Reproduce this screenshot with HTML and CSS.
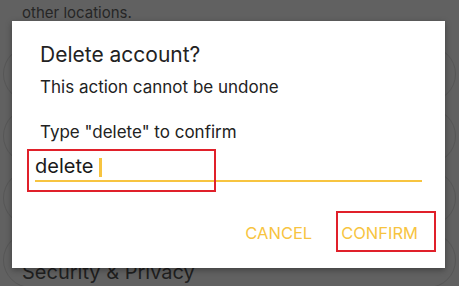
FILE: index.html
```html
<!DOCTYPE html>
<html lang="en">
<head>
    <meta charset="UTF-8">
    <meta name="viewport" content="width=device-width, initial-scale=1.0">
    <title>Delete account</title>
    <link rel="stylesheet" href="styles.css">
</head>
<body>
    <div class="screen">
        <p class="note">other locations.</p>
        <div class="cards">
            <div class="card"></div>
            <div class="card"></div>
            <div class="card"></div>
            <div class="card"><span class="card-title">Security &amp; Privacy</span></div>
        </div>

        <div class="dialog">
            <h1 class="dialog-title">Delete account?</h1>
            <p class="dialog-text">This action cannot be undone</p>
            <p class="dialog-label">Type "delete" to confirm</p>
            <div class="field">
                <span class="field-value">delete</span><span class="caret"></span>
            </div>
            <div class="actions">
                <button class="btn">CANCEL</button>
                <button class="btn">CONFIRM</button>
            </div>
            <div class="mark mark-input"></div>
            <div class="mark mark-confirm"></div>
        </div>
    </div>
</body>
</html>
```

FILE: styles.css
```css
body {
    margin: 0;
    padding: 0;
    font-family: "Inter", "Liberation Sans", sans-serif;
    background-color: #616161;
}
.screen {
    position: relative;
    width: 459px;
    height: 286px;
    overflow: hidden;
}
.note {
    margin: 0;
    padding: 3px 0 0 22px;
    font-size: 15px;
    line-height: 20px;
    color: #262626;
}
.cards {
    display: flex;
    flex-direction: column;
    gap: 6px;
    padding: 23px 3px 0 3px;
}
.card {
    height: 54px;
    border: 1px solid #565656;
    border-radius: 28px;
    padding-left: 18px;
    display: flex;
    align-items: flex-end;
}
.card-title {
    font-size: 20px;
    color: #1f1f1f;
    line-height: 24px;
    margin-bottom: 3px;
}
.dialog {
    position: absolute;
    left: 12px;
    top: 21px;
    width: 433px;
    height: 247px;
    background-color: #fff;
    box-shadow: 0 2px 6px rgba(0, 0, 0, 0.35);
    box-sizing: border-box;
    padding: 21px 23px 0 28px;
}
.dialog-title {
    margin: 0;
    font-size: 21px;
    font-weight: 400;
    line-height: 26px;
    color: #222;
}
.dialog-text {
    margin: 9px 0 0 0;
    font-size: 17px;
    line-height: 20px;
    color: #222;
}
.dialog-label {
    margin: 25px 0 0 0;
    font-size: 17px;
    line-height: 20px;
    color: #222;
}
.field {
    margin: 12px 0 0 -5px;
    height: 26px;
    border-bottom: 2px solid #f7c440;
    display: flex;
    align-items: flex-start;
}
.field-value {
    font-size: 20px;
    line-height: 24px;
    color: #1a1a1a;
}
.caret {
    width: 3px;
    height: 19px;
    margin: 4px 0 0 6px;
    background-color: #f7c440;
}
.actions {
    display: flex;
    justify-content: flex-end;
    gap: 29px;
    margin: 42px 4px 0 0;
}
.btn {
    border: none;
    background: none;
    padding: 0;
    font-family: inherit;
    font-size: 16.5px;
    line-height: 18px;
    color: #f7c440;
}
.mark {
    position: absolute;
    border: 2px solid #e0202a;
    box-sizing: border-box;
}
.mark-input {
    left: 15px;
    top: 128px;
    width: 189px;
    height: 43px;
}
.mark-confirm {
    left: 324px;
    top: 190px;
    width: 100px;
    height: 41px;
}
```
